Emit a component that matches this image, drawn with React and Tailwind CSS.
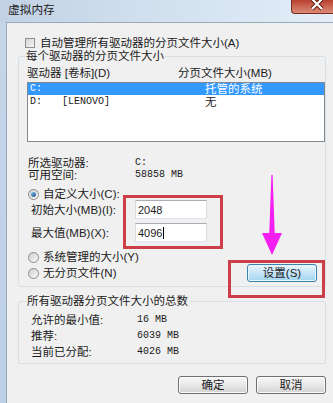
import React from 'react';

function Radio({ checked }) {
  return (
    <span className="w-[11px] h-[11px] shrink-0 rounded-full border border-[#8a8a8a] bg-gradient-to-br from-[#cfcfcf] to-[#fafafa] flex items-center justify-center">
      {checked && (
        <span className="w-[5px] h-[5px] rounded-full bg-gradient-to-br from-[#7fc4ee] to-[#1d4f86]" />
      )}
    </span>
  );
}

function WinButton({ children, blue }) {
  return (
    <div
      className={
        blue
          ? 'w-[70px] h-[18px] rounded-[3px] border border-[#3c7fb1] bg-gradient-to-b from-[#eaf6fd] via-[#c4e5f7] to-[#a2d5f2] flex items-center justify-center leading-[12px] shadow-[inset_0_0_0_1px_#e8f6fd]'
          : 'w-[70px] h-[18px] rounded-[3px] border border-[#707070] bg-gradient-to-b from-[#f7f7f7] via-[#e8e8e8] to-[#d2d2d2] flex items-center justify-center leading-[12px] shadow-[inset_0_0_0_1px_#fafafa]'
      }
    >
      {children}
    </div>
  );
}

export default function App() {
  return (
    <div className="relative w-[333px] h-[403px] overflow-hidden bg-[#f0f0f0] flex flex-col text-[11.5px] text-[#1b1b1b] font-['Liberation_Sans','Noto_Sans_CJK_SC',sans-serif]">
      {/* title bar */}
      <div className="h-[22px] shrink-0 flex items-start justify-between bg-gradient-to-r from-[#c2d2e4] via-[#d3e1ef] to-[#e2edf8]">
        <span className="ml-[8px] mt-[4px] leading-[12px] text-[11.7px] text-[#222]">虚拟内存</span>
        <div className="w-[42px] h-[14px] rounded-bl-[4px] border-l border-b border-[#7a2c22] bg-gradient-to-b from-[#b8402e] to-[#dc8a78]">
          <svg width="42" height="14" viewBox="0 0 42 14">
            <path d="M20 -1 L30 9 M30 -1 L20 9" stroke="#5c1a10" strokeWidth="4" />
            <path d="M20 -1 L30 9 M30 -1 L20 9" stroke="#fff" strokeWidth="2.2" />
          </svg>
        </div>
      </div>

      <div className="flex flex-1">
        <div className="w-[6px] bg-gradient-to-b from-[#c5d6ea] to-[#bcd0e6]" />
        <div className="flex-1 border-l border-t border-[#98a9bc] bg-[#f0f0f0] flex flex-col">
          {/* auto manage checkbox */}
          <div className="mt-[14px] ml-[18px] h-[12px] flex items-center gap-[5px] leading-[12px]">
            <span className="w-[10px] h-[10px] border border-[#8f8f8f] bg-gradient-to-br from-[#d4d4d4] to-[#f8f8f8]" />
            <span>自动管理所有驱动器的分页文件大小(A)</span>
          </div>

          {/* per-drive group */}
          <fieldset className="mt-[1px] ml-[11px] w-[308px] border border-[#d5dfe5] rounded-[3px] pb-[4px]">
            <legend className="ml-[6px] px-[1px] leading-[12px]">每个驱动器的分页文件大小</legend>
            <div className="mt-[5px] pl-[8px] flex leading-[12px]">
              <span className="w-[151px]">驱动器 [卷标](D)</span>
              <span>分页文件大小(MB)</span>
            </div>
            <div className="mt-[3px] ml-[8px] w-[298px] h-[60px] border border-[#828790] bg-white">
              <div className="h-[12px] bg-[#3399ff] text-white flex items-center pl-[2px] leading-[12px]">
                <span className="w-[175px] font-['Liberation_Mono',monospace] text-[10px]">C:</span>
                <span>托管的系统</span>
              </div>
              <div className="h-[13px] flex items-center pl-[2px] leading-[12px]">
                <span className="w-[32px] font-['Liberation_Mono',monospace] text-[10px]">D:</span>
                <span className="w-[143px] font-['Liberation_Mono',monospace] text-[10px]">[LENOVO]</span>
                <span>无</span>
              </div>
            </div>

            <div className="mt-[15px] pl-[9px] flex h-[12px] items-center leading-[12px]">
              <span className="w-[107px]">所选驱动器:</span>
              <span className="font-['Liberation_Mono',monospace] text-[10px]">C:</span>
            </div>
            <div className="pl-[9px] flex h-[12px] items-center leading-[12px]">
              <span className="w-[107px]">可用空间:</span>
              <span className="font-['Liberation_Mono',monospace] text-[10px]">58858 MB</span>
            </div>

            <div className="mt-[8px] pl-[9px] h-[11px] flex items-center gap-[4px] leading-[11px]">
              <Radio checked />
              <span>自定义大小(C):</span>
            </div>
            <div className="pl-[12px] flex flex-col gap-[4px]">
              <div className="h-[19px] flex items-center">
                <span className="w-[104px] leading-[12px]">初始大小(MB)(I):</span>
                <div className="w-[72px] h-[19px] border border-[#abadb3] border-l-[#d9dbe1] border-r-[#d9dbe1] border-b-[#dfe4ea] bg-white pl-[2px] flex items-center text-[11px] leading-[12px]">
                  2048
                </div>
              </div>
              <div className="h-[19px] flex items-center">
                <span className="w-[104px] leading-[12px]">最大值(MB)(X):</span>
                <div className="w-[72px] h-[19px] border border-[#abadb3] border-l-[#d9dbe1] border-r-[#d9dbe1] border-b-[#dfe4ea] bg-white pl-[2px] flex items-center text-[11px] leading-[12px]">
                  4096
                  <span className="ml-[1px] w-[1px] h-[12px] bg-black" />
                </div>
              </div>
            </div>

            <div className="mt-[9px] pl-[9px] h-[12px] flex items-center gap-[4px] leading-[12px]">
              <Radio />
              <span>系统管理的大小(Y)</span>
            </div>
            <div className="mt-[1px] pl-[9px] pr-[8px] h-[18px] flex items-center justify-between leading-[12px]">
              <div className="flex items-center gap-[4px]">
                <Radio />
                <span>无分页文件(N)</span>
              </div>
              <WinButton blue>设置(S)</WinButton>
            </div>
          </fieldset>

          {/* totals group */}
          <fieldset className="mt-[8px] ml-[11px] w-[308px] border border-[#d5dfe5] rounded-[3px] pb-[5px]">
            <legend className="ml-[7px] px-[1px] leading-[12px]">所有驱动器分页文件大小的总数</legend>
            <div className="mt-[7px] pl-[12px] flex flex-col gap-[4px] leading-[12px]">
              <div className="h-[12px] flex items-center">
                <span className="w-[106px]">允许的最小值:</span>
                <span className="font-['Liberation_Mono',monospace] text-[10px]">16 MB</span>
              </div>
              <div className="h-[12px] flex items-center">
                <span className="w-[106px]">推荐:</span>
                <span className="font-['Liberation_Mono',monospace] text-[10px]">6039 MB</span>
              </div>
              <div className="h-[12px] flex items-center">
                <span className="w-[106px]">当前已分配:</span>
                <span className="font-['Liberation_Mono',monospace] text-[10px]">4026 MB</span>
              </div>
            </div>
          </fieldset>

          <div className="mt-[12px] pr-[7px] flex justify-end gap-[8px]">
            <WinButton>确定</WinButton>
            <WinButton>取消</WinButton>
          </div>
        </div>
      </div>

      {/* annotations */}
      <div className="absolute left-[123px] top-[195px] w-[100px] h-[54px] border-[3px] border-[#cc3f49]" />
      <div className="absolute left-[228px] top-[260px] w-[97px] h-[38px] border-[3px] border-[#cc3f49]" />
      <svg className="absolute left-[260px] top-[172px]" width="24" height="86" viewBox="0 0 24 86">
        <polygon points="11.4,3 12.6,3 14.8,63 9.2,63" fill="#f21ff0" />
        <polygon points="2,61 22,61 12,83" fill="#f21ff0" />
      </svg>
    </div>
  );
}
